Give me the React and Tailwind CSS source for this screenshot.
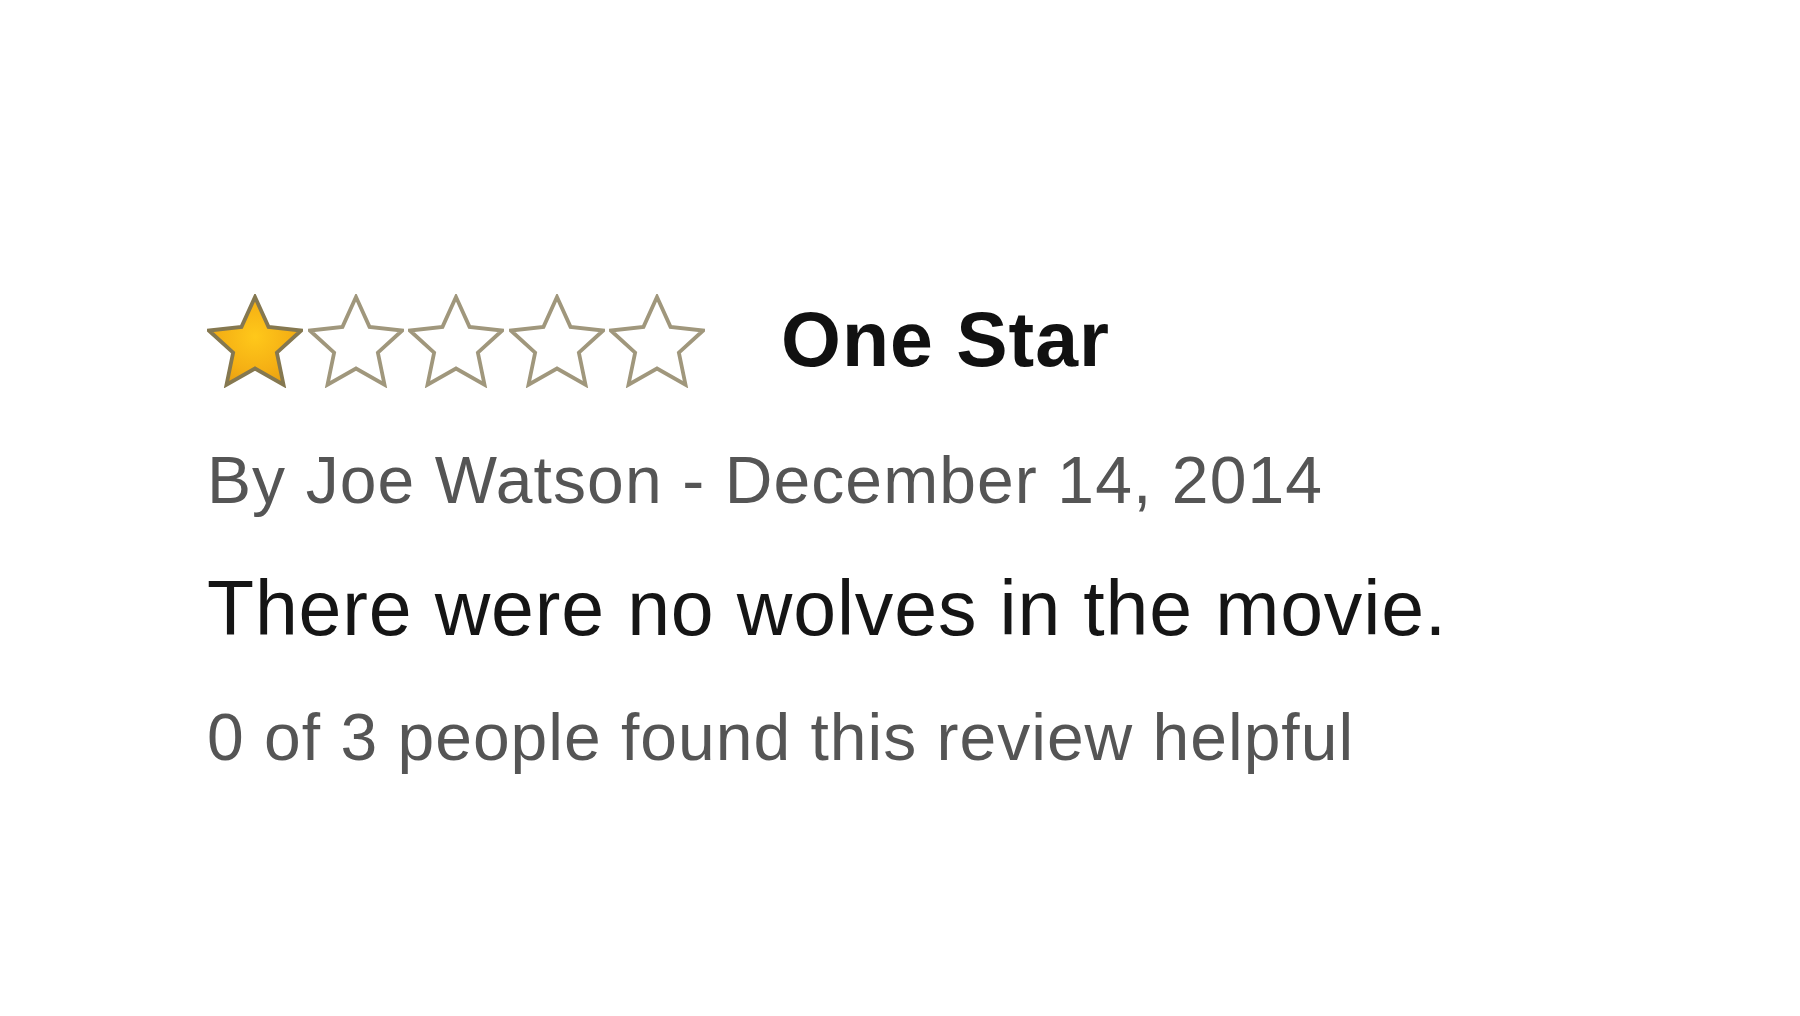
function starPoints(cx, cy, outer, inner) {
  const pts = [];
  for (let i = 0; i < 10; i++) {
    const r = i % 2 === 0 ? outer : inner;
    const a = (Math.PI / 5) * i - Math.PI / 2;
    pts.push(`${(cx + r * Math.cos(a)).toFixed(2)},${(cy + r * Math.sin(a)).toFixed(2)}`);
  }
  return pts.join(' ');
}

function Star({ filled, id }) {
  const points = starPoints(48, 51.5, 48.5, 23);
  return (
    <svg viewBox="0 0 96 94" className="w-[96px] h-[94px] shrink-0">
      <defs>
        <radialGradient id={`g${id}`} cx="0.5" cy="0.45" r="0.6">
          <stop offset="0%" stopColor="#ffc81a" />
          <stop offset="65%" stopColor="#f5b014" />
          <stop offset="100%" stopColor="#e79f12" />
        </radialGradient>
      </defs>
      <polygon
        points={points}
        fill={filled ? `url(#g${id})` : '#ffffff'}
        stroke={filled ? '#857850' : '#a0977c'}
        strokeWidth="3.8"
        strokeLinejoin="miter"
      />
    </svg>
  );
}

export default function App() {
  return (
    <div className="w-[1800px] h-[1016px] bg-white pl-[207px] pt-[292px] font-['Liberation_Sans',Arial,sans-serif]">
      {/* Rating + title */}
      <div className="flex items-center">
        <div className="flex gap-[4.5px] translate-y-[2px]">
          {[0, 1, 2, 3, 4].map(i => (
            <Star key={i} id={i} filled={i === 0} />
          ))}
        </div>
        <h2 className="ml-[76px] text-[77px] leading-none font-bold text-[#111111] tracking-[1px]">One Star</h2>
      </div>

      <p className="mt-[61px] text-[66px] leading-none text-[#555555] tracking-[1.1px]">
        By Joe Watson - December 14, 2014
      </p>

      <p className="mt-[57px] text-[77px] leading-none text-[#151515] tracking-[0.85px]">
        There were no wolves in the movie.
      </p>

      <p className="mt-[57px] text-[66px] leading-none text-[#555555] tracking-[1px]">
        0 of 3 people found this review helpful
      </p>
    </div>
  );
}
